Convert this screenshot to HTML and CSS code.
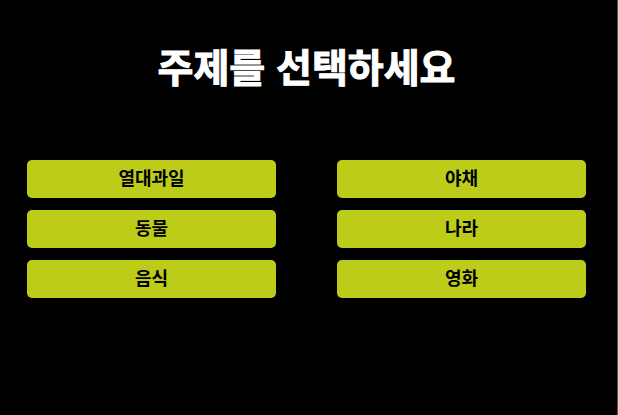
FILE: index.html
```html
<!DOCTYPE html>
<html lang="ko">
<head>
<meta charset="utf-8">
<meta name="viewport" content="width=device-width, initial-scale=1">
<title>주제를 선택하세요</title>
<link rel="stylesheet" href="styles.css">
</head>
<body>
<main class="page">
<h1 class="title">주제를 선택하세요</h1>
<div class="topics">
<button class="topic" type="button">열대과일</button>
<button class="topic" type="button">야채</button>
<button class="topic" type="button">동물</button>
<button class="topic" type="button">나라</button>
<button class="topic" type="button">음식</button>
<button class="topic" type="button">영화</button>
</div>
</main>
</body>
</html>
```

FILE: styles.css
```css
* {
  box-sizing: border-box;
}

body {
  margin: 0;
  background: #000;
  color: #fff;
  font-family: "Noto Sans CJK KR", sans-serif;
}

.page {
  min-height: 100vh;
  padding: 35px 31px 36px 27px;
  border-right: 1px solid #555;
}

.title {
  margin: 0 0 65px;
  font-size: 39px;
  line-height: 60px;
  font-weight: 700;
  text-align: center;
  -webkit-text-stroke: 1px #fff;
}

.topics {
  display: grid;
  grid-template-columns: 1fr 1fr;
  gap: 12px 61px;
}

.topic {
  height: 38px;
  padding: 0 0 4px;
  border: 0;
  border-radius: 5px;
  background: #bdcc18;
  color: #000;
  font: inherit;
  font-size: 18px;
  line-height: 34px;
  font-weight: 700;
  cursor: pointer;
}
```
